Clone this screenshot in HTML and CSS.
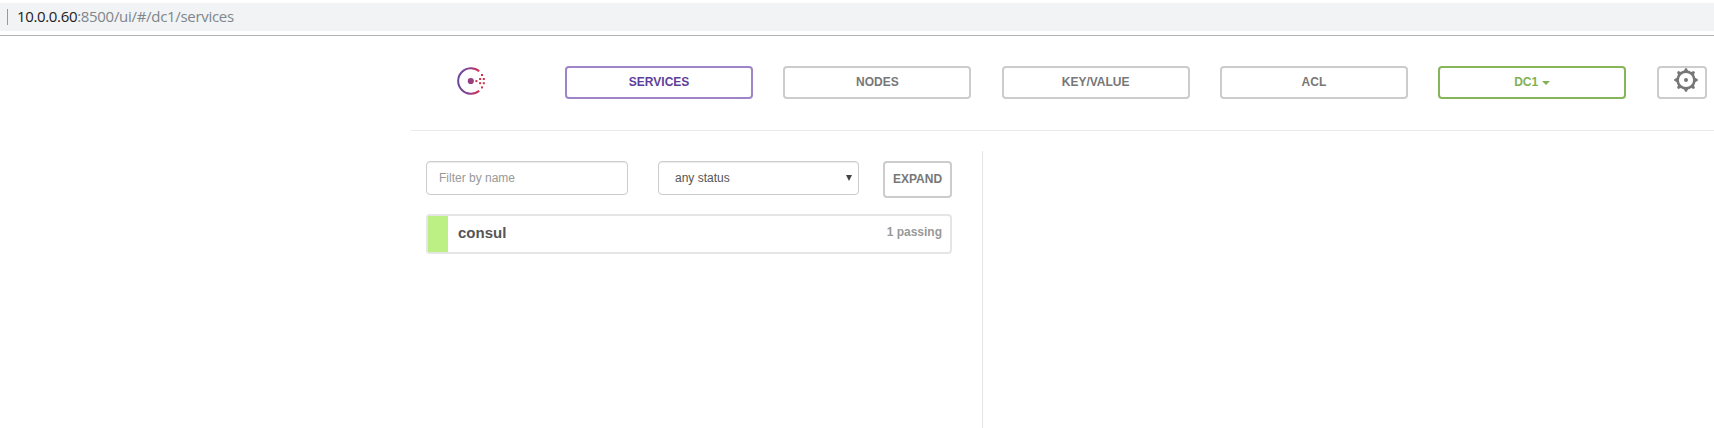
FILE: index.html
```html
<!DOCTYPE html>
<html lang="en">
<head>
<meta charset="utf-8">
<title>Consul</title>
<link rel="stylesheet" href="styles.css">
</head>
<body>
<div class="address-bar"><span class="separator"></span><span class="host">10.0.0.60</span><span class="path">:8500/ui/#/dc1/services</span></div>
<div class="app">
  <header class="topbar">
    <svg class="logo" width="28" height="28" viewBox="0 0 28 28">
      <defs><linearGradient id="ring" x1="0" y1="0" x2="1" y2="0"><stop offset="0" stop-color="#694a9c"/><stop offset=".5" stop-color="#8a4190"/><stop offset="1" stop-color="#d62f4d"/></linearGradient></defs>
      <path d="M22.2 4.2A12.8 12.8 0 1 0 22.2 23.8" fill="none" stroke="url(#ring)" stroke-width="2"/>
      <circle cx="13.8" cy="14" r="3.1" fill="#96407f"/>
      <g fill="#d0304c"><rect x="24" y="7" width="2" height="2"/><rect x="22.1" y="11" width="2" height="2"/><rect x="25.8" y="11" width="2" height="2"/><rect x="18.4" y="13.1" width="2" height="2"/><rect x="22.1" y="15.2" width="2" height="2"/><rect x="25.8" y="15.2" width="2" height="2"/><rect x="24" y="19.4" width="2" height="2"/></g>
    </svg>
    <nav class="nav">
      <a class="btn active">SERVICES</a>
      <a class="btn">NODES</a>
      <a class="btn">KEY/VALUE</a>
      <a class="btn">ACL</a>
      <a class="btn dc">DC1<span class="caret"></span></a>
    </nav>
    <a class="btn settings">
      <svg width="24" height="24" viewBox="-12 -12 24 24">
        <circle r="8.4" fill="none" stroke="#777" stroke-width="2.6"/>
        <circle r="2" fill="#777"/>
        <g fill="#777"><path d="M-2.4-8.6-.8-11.8H.8L2.4-8.6z"/><path d="M-2.4-8.6-.8-11.8H.8L2.4-8.6z" transform="rotate(45)"/><path d="M-2.4-8.6-.8-11.8H.8L2.4-8.6z" transform="rotate(90)"/><path d="M-2.4-8.6-.8-11.8H.8L2.4-8.6z" transform="rotate(135)"/><path d="M-2.4-8.6-.8-11.8H.8L2.4-8.6z" transform="rotate(180)"/><path d="M-2.4-8.6-.8-11.8H.8L2.4-8.6z" transform="rotate(225)"/><path d="M-2.4-8.6-.8-11.8H.8L2.4-8.6z" transform="rotate(270)"/><path d="M-2.4-8.6-.8-11.8H.8L2.4-8.6z" transform="rotate(315)"/></g>
      </svg>
    </a>
  </header>
  <main class="columns">
    <section class="list">
      <div class="filters">
        <input class="field" type="text" placeholder="Filter by name">
        <div class="field select"><span>any status</span><svg width="6" height="6" viewBox="0 0 6 6"><path d="M0 0H6L3 6z" fill="#444"/></svg></div>
        <button class="expand">EXPAND</button>
      </div>
      <div class="service"><span class="health"></span><span class="name">consul</span><span class="checks">1 passing</span></div>
    </section>
  </main>
</div>
</body>
</html>
```
FILE: styles.css
```css
* { box-sizing: border-box; }
body { margin: 0; height: 428px; overflow: hidden; background: #fff; font-family: "Liberation Sans", Arial, sans-serif; display: flex; flex-direction: column; }
.address-bar { height: 36px; border-top: 3px solid #fff; border-bottom: 1px solid #b3b3b3; background: linear-gradient(#f1f3f4 28px, #fff 28px); display: flex; align-items: flex-start; font: 15px/27px "Open Sans", sans-serif; color: #222; padding-left: 7px; white-space: pre; }
.separator { width: 1px; height: 16px; background: #999; margin: 6px 9px 0 0; }
.host { letter-spacing: -.35px; }
.path { color: #80868b; letter-spacing: -.3px; }
.app { flex: 1; margin-left: 411px; display: flex; flex-direction: column; }
.topbar { height: 95px; border-bottom: 1px solid #eaeaea; padding: 30px 7px 0 46px; display: flex; align-items: flex-start; }
.logo { margin: 1px 80px 0 0; }
.nav { width: 1062px; display: grid; grid-template-columns: repeat(5, 188.2px); gap: 30.1px; margin-right: 30px; }
.btn { height: 33px; border: 2px solid #ccc; border-radius: 4px; color: #777; font-size: 12px; font-weight: 700; line-height: 28px; text-align: center; }
.active { border-color: #9f84c7; color: #5f3f99; }
.dc { border-color: #86b55a; color: #80b154; }
.caret { display: inline-block; border: 4px solid transparent; border-top-color: #80b154; border-bottom: 0; margin-left: 4px; vertical-align: 1px; }
.settings { width: 50px; padding: 0 0 0 15px; display: flex; }
.columns { flex: 1; display: flex; padding-top: 20px; }
.list { width: 572px; border-right: 1px solid #e5e5e5; padding: 10px 30px 0 15px; }
.filters { display: flex; align-items: flex-start; }
.field { width: 202px; height: 34px; border: 1px solid #ccc; border-radius: 4px; box-shadow: inset 0 1px 1px rgba(0,0,0,.075); padding: 0 12px; font: 12px "Liberation Sans", Arial, sans-serif; color: #555; background: #fff; }
.field::placeholder { color: #999; opacity: 1; }
.select { width: 201px; margin-left: 30px; padding: 0 6px 0 16px; display: flex; align-items: center; justify-content: space-between; }
.expand { margin-left: 24px; width: 69px; height: 37px; border: 2px solid #ccc; border-radius: 4px; background: #fff; color: #777; font: bold 12px "Liberation Sans", Arial, sans-serif; padding: 0 0 2px; }
.service { margin-top: 16px; height: 40px; border: 2px solid #e5e5e5; border-radius: 4px; display: flex; line-height: 34px; font-weight: 700; }
.health { width: 20px; background: #bcf085; margin-right: 10px; }
.name { font-size: 15px; color: #555; }
.checks { margin-left: auto; padding-right: 8px; font-size: 12px; line-height: 32px; color: #999; }
```
